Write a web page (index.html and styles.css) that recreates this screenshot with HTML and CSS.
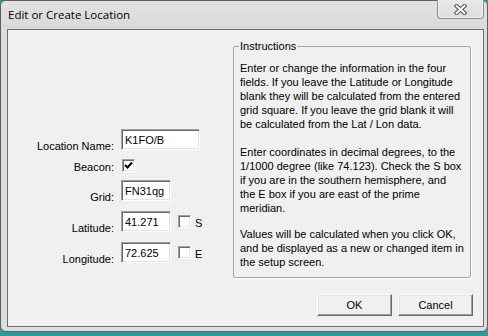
FILE: index.html
```html
<!DOCTYPE html>
<html lang="en">
  <head>
    <meta charset="UTF-8" />
    <title>Edit or Create Location</title>
    <link rel="stylesheet" href="styles.css">
  </head>
  <body>
    <div class="window">
      <div class="titlebar">
        <span class="title">Edit or Create Location</span>
        <button class="close-btn" type="button">
          <svg width="13" height="11" viewBox="0 0 13 11">
            <path d="M2.5 2 L10.5 9 M10.5 2 L2.5 9" stroke="#505050" stroke-width="4" stroke-linecap="square" fill="none" />
            <path d="M2.5 2 L10.5 9 M10.5 2 L2.5 9" stroke="#fff" stroke-width="2" stroke-linecap="square" fill="none" />
          </svg>
        </button>
      </div>
      <div class="client">
        <div class="content">
          <div class="form">
            <div class="row">
              <label for="name">Location Name:</label>
              <input type="text" id="name" class="field field-wide" value="K1FO/B" />
            </div>
            <div class="row row-beacon">
              <label>Beacon:</label>
              <span class="check">
                <svg width="9" height="9" viewBox="0 0 9 9">
                  <path d="M1 4 L3.5 6.5 L8 1.5" stroke="#000" stroke-width="2" fill="none" />
                </svg>
              </span>
            </div>
            <div class="row row-grid">
              <label for="grid">Grid:</label>
              <input type="text" id="grid" class="field" value="FN31qg" />
            </div>
            <div class="row row-coord">
              <label for="lat">Latitude:</label>
              <input type="text" id="lat" class="field" value="41.271" />
              <span class="check"></span>
              <span class="check-label">S</span>
            </div>
            <div class="row row-coord">
              <label for="lon">Longitude:</label>
              <input type="text" id="lon" class="field" value="72.625" />
              <span class="check"></span>
              <span class="check-label">E</span>
            </div>
          </div>

          <fieldset class="instructions">
            <legend>Instructions</legend>
            <p>Enter or change the information in the four<br>
              fields. If you leave the Latitude or Longitude<br>
              blank they will be calculated from the entered<br>
              grid square. If you leave the grid blank it will<br>
              be calculated from the Lat / Lon data.</p>
            <p class="tight">Enter coordinates in decimal degrees, to the<br>
              1/1000 degree (like 74.123). Check the S box<br>
              if you are in the southern hemisphere, and<br>
              the E box if you are east of the prime<br>
              meridian.</p>
            <p>Values will be calculated when you click OK,<br>
              and be displayed as a new or changed item in<br>
              the setup screen.</p>
          </fieldset>
        </div>
        <div class="buttons">
          <button type="button" class="btn">OK</button>
          <button type="button" class="btn">Cancel</button>
        </div>
      </div>
    </div>
  </body>
</html>
```

FILE: styles.css
```css
body {
  margin: 0;
  padding: 0;
  background: #2a9a9c;
  font-family: "Liberation Sans", Arial, sans-serif;
  font-size: 11px;
  color: #000;
}
.window {
  box-sizing: border-box;
  width: 488px;
  height: 332px;
  border: 1px solid #5e5e5e;
  border-radius: 6px;
  background: #dedede;
  padding: 0 3px 4px 6px;
  display: flex;
  flex-direction: column;
}
.titlebar {
  height: 28px;
  display: flex;
  align-items: flex-start;
  justify-content: space-between;
  background: linear-gradient(to bottom, #e2e2e2, #d9d9d9);
  margin: 0 -3px 0 -6px;
  padding: 0 3px 0 6px;
  border-radius: 5px 5px 0 0;
}
.title {
  font-family: "Open Sans", sans-serif;
  font-size: 11.5px;
  margin-top: 6px;
  margin-left: 1px;
}
.close-btn {
  width: 47px;
  height: 19px;
  margin-top: -1px;
  margin-right: 0;
  padding: 0;
  border: 1px solid #8c8c8c;
  border-top: none;
  border-radius: 0 0 4px 4px;
  background: linear-gradient(to bottom, #e8e8e8, #dcdcdc);
  box-shadow: inset 1px 0 #f4f4f4, inset -1px -1px #f4f4f4;
  display: flex;
  align-items: center;
  justify-content: center;
}
.client {
  flex: 1;
  background: #f0f0f0;
  border: 1px solid #6e6e6e;
  display: flex;
  flex-direction: column;
}
.content {
  display: flex;
  flex: 1;
}
.form {
  width: 225px;
  padding-top: 99px;
}
.row {
  display: flex;
  align-items: center;
  height: 21px;
}
.row label {
  width: 106px;
  margin-right: 7px;
  text-align: right;
  padding-top: 13px;
}
.row-beacon {
  height: 13px;
  margin-top: 9px;
}
.row-beacon label {
  padding-top: 2px;
  margin-right: 8px;
}
.row-grid {
  margin-top: 8px;
}
.row-coord {
  margin-top: 10px;
}
.field {
  box-sizing: border-box;
  width: 50px;
  height: 21px;
  margin: 0;
  padding: 1px 0 0 3px;
  font-family: "Liberation Sans", Arial, sans-serif;
  font-size: 11px;
  color: #000;
  background: #fff;
  border: 1px solid;
  border-color: #a0a0a0 #fff #fff #a0a0a0;
  box-shadow: inset 1px 1px #696969, inset -1px -1px #e3e3e3;
  outline: none;
}
.field-wide {
  width: 79px;
}
.check {
  box-sizing: border-box;
  width: 13px;
  height: 13px;
  background: #fff;
  border: 1px solid;
  border-color: #a0a0a0 #fff #fff #a0a0a0;
  box-shadow: inset 1px 1px #696969, inset -1px -1px #e3e3e3;
  display: flex;
  align-items: center;
  justify-content: center;
}
.row-coord .check {
  margin-left: 7px;
}
.check-label {
  margin-left: 4px;
  padding-top: 3px;
}
.instructions {
  box-sizing: border-box;
  width: 238px;
  height: 238px;
  margin: 10px 0 0 0;
  padding: 9px 6px 0 6px;
  border: 1px solid #a5a5a5;
  border-radius: 2px;
  box-shadow: 1px 1px 0 #fff;
}
.instructions legend {
  padding: 0 1px;
  margin-left: -1px;
}
.instructions p {
  margin: 0 0 14px 0;
  line-height: 14px;
  white-space: nowrap;
}
.instructions p.tight {
  margin-bottom: 12px;
}
.buttons {
  display: flex;
  justify-content: flex-end;
  gap: 6px;
  padding: 15px 10px 10px 0;
}
.btn {
  width: 75px;
  height: 22px;
  padding: 0;
  font-family: "Liberation Sans", Arial, sans-serif;
  font-size: 11px;
  color: #000;
  background: #f0f0f0;
  border: 1px solid;
  border-color: #fff #696969 #696969 #fff;
  box-shadow: inset -1px -1px #a0a0a0, inset 1px 1px #e3e3e3;
}
```
